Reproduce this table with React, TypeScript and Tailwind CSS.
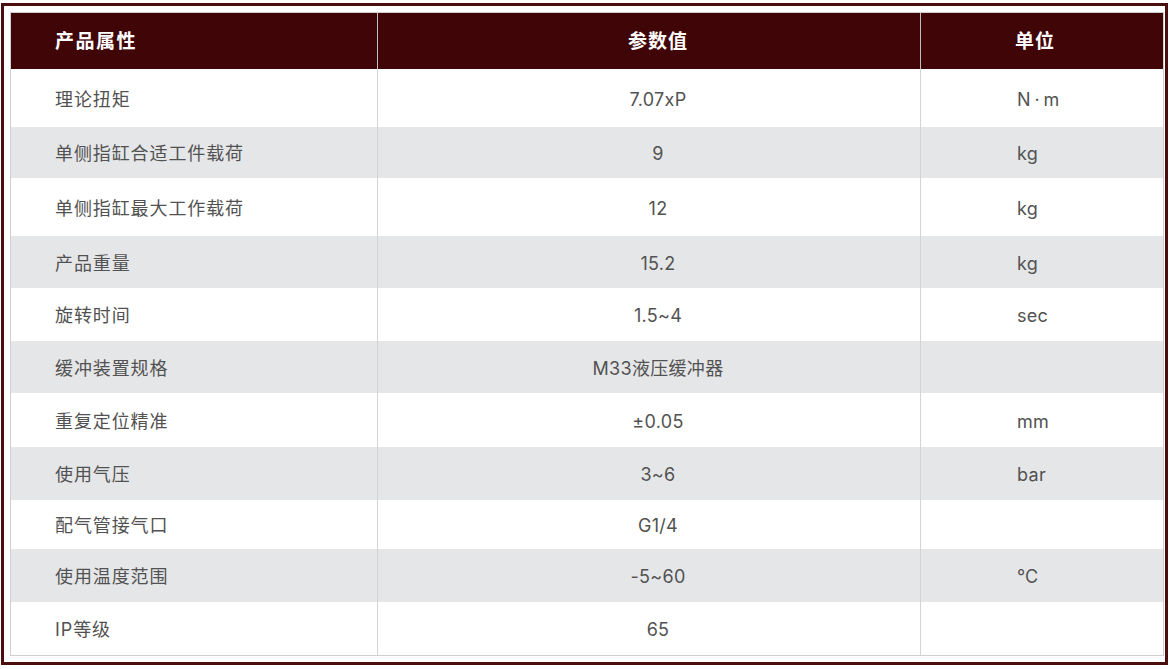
import React from "react";

const rows: { name: string; value: string; unit: string; h: string; gray: boolean }[] = [
  { name: "理论扭矩", value: "7.07xP", unit: "N\u2009·\u2009m", h: "h-[58px]", gray: false },
  { name: "单侧指缸合适工件载荷", value: "9", unit: "kg", h: "h-[51px]", gray: true },
  { name: "单侧指缸最大工作载荷", value: "12", unit: "kg", h: "h-[58px]", gray: false },
  { name: "产品重量", value: "15.2", unit: "kg", h: "h-[52px]", gray: true },
  { name: "旋转时间", value: "1.5~4", unit: "sec", h: "h-[53px]", gray: false },
  { name: "缓冲装置规格", value: "M33液压缓冲器", unit: "", h: "h-[52px]", gray: true },
  { name: "重复定位精准", value: "±0.05", unit: "mm", h: "h-[54px]", gray: false },
  { name: "使用气压", value: "3~6", unit: "bar", h: "h-[53px]", gray: true },
  { name: "配气管接气口", value: "G1/4", unit: "", h: "h-[49px]", gray: false },
  { name: "使用温度范围", value: "-5~60", unit: "℃", h: "h-[53px]", gray: true },
  { name: "IP等级", value: "65", unit: "", h: "h-[53px]", gray: false },
];

export default function App() {
  return (
    <div className="w-[1173px] h-[669px] bg-white font-['Inter','Noto_Sans_CJK_SC',sans-serif]">
      <div className="ml-[1px] mt-[3px] w-[1167px] h-[662px] border-[3px] border-[#4a0e0e] pl-[6px] pt-[6px]">
        <div className="w-[1154px] border border-[#cfcfcf] flex flex-col">
          <div className="flex h-[56px] bg-[#3f0507] text-white font-bold text-[19px]">
            <div className="w-[367px] border-r border-[#bfbfbf] flex items-center pl-[44px] pt-[3px] tracking-[1.5px]">产品属性</div>
            <div className="w-[543px] border-r border-[#bfbfbf] flex items-center justify-center pl-[18px] pt-[3px] tracking-[1px]">参数值</div>
            <div className="flex-1 flex items-center pl-[94px] pt-[3px] tracking-[1px]">单位</div>
          </div>
          {rows.map((r, i) => (
            <div
              key={i}
              className={`flex ${r.h} ${r.gray ? "bg-[#e5e6e8]" : "bg-white"} text-[#525252] text-[18px]`}
            >
              <div className="w-[367px] border-r border-[#d4d4d4] flex items-center pl-[44px] pt-[2px] tracking-[0.9px]">{r.name}</div>
              <div className="w-[543px] border-r border-[#d4d4d4] flex items-center justify-center pl-[18px] pt-[2px] tracking-[0.3px]">{r.value}</div>
              <div className="flex-1 flex items-center pl-[96px] pt-[2px] tracking-[0.3px]">{r.unit}</div>
            </div>
          ))}
        </div>
      </div>
    </div>
  );
}
